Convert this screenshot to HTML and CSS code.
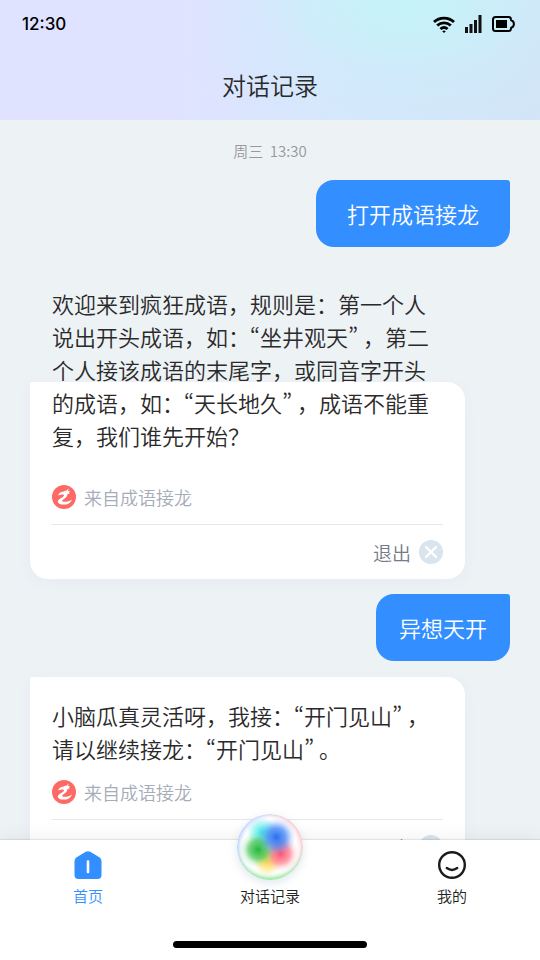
FILE: index.html
```html
<!DOCTYPE html>
<html lang="zh-CN">
<head>
<meta charset="utf-8">
<meta name="viewport" content="width=device-width, initial-scale=1">
<title>对话记录</title>
<link rel="stylesheet" href="styles.css">
</head>
<body>
<svg class="defs" aria-hidden="true">
  <symbol id="dragon" viewBox="0 0 24 24">
    <circle cx="12" cy="12" r="12" fill="#fd6a66"/>
    <path fill="#fff" d="M6.200 10.400C7 7.800 9.500 6.600 12 6.600L13.200 5.400 13.700 6.200 16.800 3.600 16 5.800 18 6.700 17.100 7.600 17.500 8.700 15.500 8.900C15.600 11.200 13.600 12.600 11.800 13.900 9.900 15.200 9.600 16.500 11.600 16.700 14.500 16.900 17.800 16.300 20 14.400 18.700 18 15.200 19.800 11.200 19.600 6.600 19.400 5 17.200 6.300 15.200 7.500 13.300 11 12.500 12 10.700 12.300 9.300 9.700 9 6.200 10.400Z"/>
  </symbol>
  <symbol id="close" viewBox="0 0 24 24">
    <circle cx="12" cy="12" r="12" fill="#d9e4ed"/>
    <path d="M7 7l10 10M17 7L7 17" stroke="#fff" stroke-width="2.400" stroke-linecap="round"/>
  </symbol>
</svg>
<div class="app">
  <header class="header">
    <div class="status">
      <span class="clock">12:30</span>
      <div class="status-icons">
        <svg width="22" height="17" viewBox="0 0 22 17" fill="none" stroke="#000" stroke-width="2.800">
          <path d="M1 6C6.500.8 15.500.8 21 6M4.200 9.600c3.900-3.700 9.700-3.700 13.600 0M7.400 13c2.200-1.900 5-1.900 7.200 0"/>
          <path d="M9.200 15.200q1.800-1.500 3.600 0L11 17z" fill="#000" stroke="none"/>
        </svg>
        <svg width="17" height="18" viewBox="0 0 17 18" fill="#111">
          <path d="M0 12h3v6H0zM4.500 9h3v9h-3zM9 5h3v13H9zM13.500 0h3v18h-3z"/>
        </svg>
        <svg width="23" height="16" viewBox="0 0 23 16" fill="none">
          <path d="M3.500 1h13.300q1.900 0 2.200 2.400l.2.900q2.700.9 2.700 3.700t-2.700 3.700l-.2.900q-.3 2.400-2.200 2.400H3.500Q1 15 1 12.500v-9Q1 1 3.500 1z" stroke="#000" stroke-width="2"/>
          <path d="M4 4h11v8H4z" fill="#000"/>
        </svg>
      </div>
    </div>
    <h1 class="title">对话记录</h1>
  </header>

  <main class="chat">
    <time class="time">周三&nbsp; 13:30</time>
    <p class="bubble">打开成语接龙</p>
    <article class="card card-first">
      <p class="text text-raised">欢迎来到疯狂成语，规则是：第一个人<br>说出开头成语，如：<span class="quote">“</span>坐井观天<span class="quote">”</span> ，第二<br>个人接该成语的末尾字，或同音字开头<br>的成语，如：<span class="quote">“</span>天长地久<span class="quote">”</span> ，成语不能重<br>复，我们谁先开始？</p>
      <div class="source"><svg class="badge"><use href="#dragon"/></svg>来自成语接龙</div>
      <button class="exit" type="button">退出<svg class="badge"><use href="#close"/></svg></button>
    </article>
    <p class="bubble bubble-short">异想天开</p>
    <article class="card">
      <p class="text">小脑瓜真灵活呀，我接：<span class="quote">“</span>开门见山<span class="quote">”</span> ，<br>请以继续接龙：<span class="quote">“</span>开门见山<span class="quote">”</span> 。</p>
      <div class="source"><svg class="badge"><use href="#dragon"/></svg>来自成语接龙</div>
      <button class="exit" type="button">退出<svg class="badge"><use href="#close"/></svg></button>
    </article>
  </main>

  <nav class="nav">
    <div class="tabs">
      <a class="tab tab-active" href="#home">
        <svg width="28" height="28" viewBox="0 0 28 28">
          <path d="M11.700.8q2.300-1.300 4.600 0l9 5.500q2.200 1.400 2.200 3.900V24q0 4-4 4h-19q-4 0-4-4V10.200q0-2.500 2.200-3.900z" fill="#338fff"/>
          <path d="M14 10.500v10.500" stroke="#fff" stroke-width="2.600" stroke-linecap="round"/>
        </svg>
        <span>首页</span>
      </a>
      <a class="tab" href="#chat">
        <span class="orb"></span>
        <span>对话记录</span>
      </a>
      <a class="tab" href="#me">
        <svg width="28" height="28" viewBox="0 0 28 28" fill="none" stroke="#1b1b1b" stroke-width="2.400" stroke-linecap="round">
          <circle cx="14" cy="14" r="12.800"/>
          <path d="M8.800 17q5.200 3.800 10.400 0"/>
        </svg>
        <span>我的</span>
      </a>
    </div>
    <div class="indicator"></div>
  </nav>
</div>
</body>
</html>
```
FILE: styles.css
```css
* { box-sizing: border-box; }

body {
  margin: 0;
  font-family: "Noto Sans CJK SC", sans-serif;
  font-weight: 350;
  color: #2a2a2a;
}

h1, p { margin: 0; }

.defs { position: absolute; width: 0; height: 0; }

.app {
  display: flex;
  flex-direction: column;
  height: 100vh;
  background: #edf2f5;
}

.header {
  height: 120px;
  flex: none;
  background:
    radial-gradient(ellipse 150px 70px at 75% 0, #c5f3f8, #c5f3f800),
    radial-gradient(ellipse 230px 150px at 76% 20%, #cbedfa, #cbedfa00),
    linear-gradient(100deg, #e0e3ff, #dfe3ff 35%, #dae5fd 60%, #d4e3f6);
}

.status {
  display: flex;
  align-items: center;
  justify-content: space-between;
  height: 48px;
  padding: 0 25px 0 22px;
}

.clock {
  font-family: Inter, sans-serif;
  font-size: 17px;
  font-weight: 500;
  color: #000;
}

.status-icons {
  display: flex;
  align-items: center;
  gap: 10px;
}

.title {
  font-size: 24px;
  font-weight: 350;
  line-height: 36px;
  padding-top: 19px;
  text-align: center;
}

.chat {
  display: flex;
  flex-direction: column;
  flex: 1;
  min-height: 0;
  overflow: hidden;
  padding: 18px 30px 0;
}

.time {
  line-height: 26px;
  margin-bottom: 16px;
  font-size: 15px;
  color: #999;
  text-align: center;
}

.bubble {
  flex: none;
  align-self: flex-end;
  padding: 0 31px;
  border-radius: 18px 3px 18px 18px;
  background: #338fff;
  color: #fff;
  font-size: 22px;
  line-height: 67px;
}

.bubble-short { padding: 0 23px; }

.card {
  flex: none;
  margin: 16px 45px 15px 0;
  padding: 22px 22px 0;
  border-radius: 3px 18px 18px 18px;
  background: #fff;
  box-shadow: 0 4px 12px #d8e2f04d;
}

.card-first { margin-top: 135px; padding-top: 0; }

.text {
  margin-bottom: 15px;
  font-size: 22px;
  line-height: 33px;
  white-space: nowrap;
}

.text-raised {
  margin-top: -95px;
  margin-bottom: 33px;
}

.quote {
  font-feature-settings: "pwid";
  text-spacing-trim: space-all;
}

.source {
  display: flex;
  align-items: center;
  gap: 8px;
  height: 39px;
  padding-bottom: 15px;
  font-size: 18px;
  color: #a6acb8;
}

.badge { width: 24px; height: 24px; }

.exit {
  display: flex;
  align-items: center;
  justify-content: flex-end;
  gap: 8px;
  width: 100%;
  height: 55px;
  padding: 0;
  border: 0;
  border-top: 1px solid #e2e8ee;
  background: none;
  font: inherit;
  font-size: 19px;
  color: #747b89;
}

.nav {
  position: relative;
  flex: none;
  height: 120px;
  background: #fff;
  box-shadow: 0 -1px 1px #00000014, 0 -4px 18px #0000000d;
}

.tabs {
  display: flex;
  justify-content: space-between;
  height: 101px;
  padding: 0 56px;
}

.tab {
  display: flex;
  flex-direction: column;
  align-items: center;
  width: 64px;
  padding-top: 11px;
  font-size: 15px;
  line-height: 22px;
  color: #222;
  text-decoration: none;
  white-space: nowrap;
}

.tab svg { margin-bottom: 6px; }

.tab-active { color: #338fff; }

.orb {
  width: 66px;
  height: 66px;
  flex: none;
  margin-top: -37px;
  margin-bottom: 5px;
  border-radius: 50%;
  background:
    radial-gradient(circle at 60% 35%, #2a70ee, #3c82f5bb 9px, #4a8cff33 15px, #4a8cff00 19px),
    radial-gradient(circle at 32% 54%, #25b83b, #35c045aa 9px, #50d06033 14px, #50d06000 18px),
    radial-gradient(circle at 66% 60%, #ff5570, #ff6a80aa 9px, #ff809033 14px, #ff809000 18px),
    radial-gradient(circle at 46% 72%, #ffdc50, #ffe070aa 7px, #ffe47000 14px),
    radial-gradient(circle at 38% 28%, #40e8e8, #60ecebaa 7px, #70efef00 15px),
    #fff;
  box-shadow:
    0 3px 10px #5078a02e,
    inset 0 -5px 5px -3px #5fdb6dcc,
    inset 4px 2px 5px -3px #8bb5ffcc,
    inset -4px 2px 5px -3px #ff9ba8cc;
}

.indicator {
  width: 194px;
  height: 7px;
  margin: 0 auto;
  border-radius: 4px;
  background: #000;
}
```
